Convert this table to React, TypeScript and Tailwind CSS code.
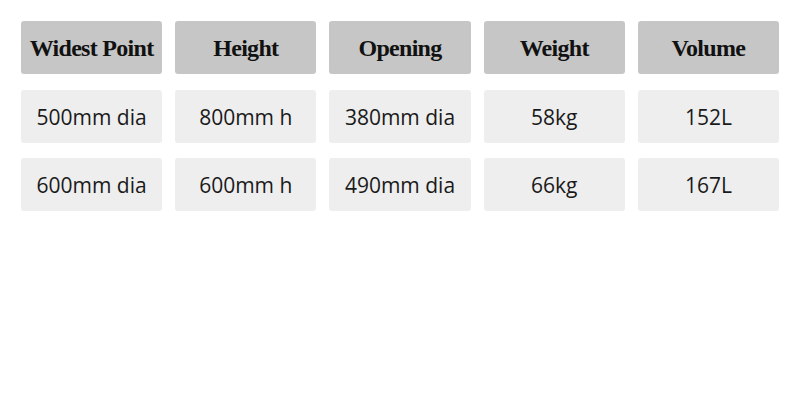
import React from "react";

const headers = ["Widest Point", "Height", "Opening", "Weight", "Volume"];

const rows = [
  ["500mm dia", "800mm h", "380mm dia", "58kg", "152L"],
  ["600mm dia", "600mm h", "490mm dia", "66kg", "167L"],
];

export default function App() {
  return (
    <div className="w-[800px] h-[400px] bg-white px-[21px] pt-[21px]">
      <div className="grid grid-cols-5 gap-x-[13px] gap-y-[15.5px]">
        {headers.map((h) => (
          <div
            key={h}
            className="flex h-[53px] items-center justify-center rounded-[3px] bg-[#c6c6c6] font-['Liberation_Serif',serif] text-[24px] font-bold tracking-[-0.7px] text-[#111]"
          >
            {h}
          </div>
        ))}
        {rows.flat().map((v, i) => (
          <div
            key={i}
            className="flex h-[53px] items-center justify-center rounded-[3px] bg-[#eeeeee] pt-[3px] font-['Open_Sans',sans-serif] text-[21px] text-[#1a1a1a]"
          >
            {v}
          </div>
        ))}
      </div>
    </div>
  );
}
